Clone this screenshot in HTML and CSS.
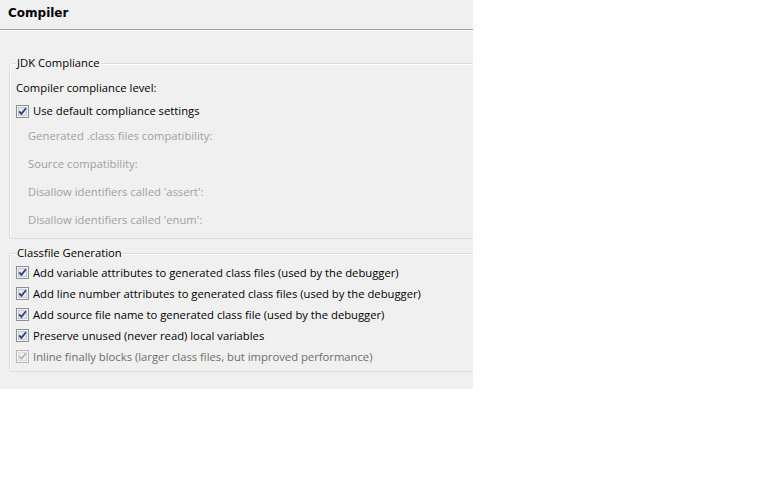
FILE: index.html
```html
<!DOCTYPE html>
<html>
<head>
<meta charset="utf-8">
<link rel="stylesheet" href="styles.css">
</head>
<body>
<div class="panel">
  <div class="header"><span class="title">Compiler</span></div>
  <div class="content">
    <fieldset class="group group-jdk">
      <legend>JDK Compliance</legend>
      <div class="row label-row">Compiler compliance level:</div>
      <label class="row check-row default-row">
        <svg class="cb" width="13" height="13" viewBox="0 0 13 13"><rect x="0.5" y="0.5" width="12" height="12" fill="#f4f4f4" stroke="#8e8f8f"/><rect x="2.5" y="2.5" width="8" height="8" fill="#e6e9ee" stroke="#c3c8d0"/><path d="M3.2 6.3 L5.4 8.8 L9.9 3.2" fill="none" stroke="#2c3f83" stroke-width="1.8"/></svg>
        <span>Use default compliance settings</span>
      </label>
      <div class="disabled-list">
        <div class="row disabled">Generated .class files compatibility:</div>
        <div class="row disabled">Source compatibility:</div>
        <div class="row disabled">Disallow identifiers called 'assert':</div>
        <div class="row disabled">Disallow identifiers called 'enum':</div>
      </div>
    </fieldset>
    <fieldset class="group group-class">
      <legend>Classfile Generation</legend>
      <label class="row check-row">
        <svg class="cb" width="13" height="13" viewBox="0 0 13 13"><rect x="0.5" y="0.5" width="12" height="12" fill="#f4f4f4" stroke="#8e8f8f"/><rect x="2.5" y="2.5" width="8" height="8" fill="#e6e9ee" stroke="#c3c8d0"/><path d="M3.2 6.3 L5.4 8.8 L9.9 3.2" fill="none" stroke="#2c3f83" stroke-width="1.8"/></svg>
        <span>Add variable attributes to generated class files (used by the debugger)</span>
      </label>
      <label class="row check-row">
        <svg class="cb" width="13" height="13" viewBox="0 0 13 13"><rect x="0.5" y="0.5" width="12" height="12" fill="#f4f4f4" stroke="#8e8f8f"/><rect x="2.5" y="2.5" width="8" height="8" fill="#e6e9ee" stroke="#c3c8d0"/><path d="M3.2 6.3 L5.4 8.8 L9.9 3.2" fill="none" stroke="#2c3f83" stroke-width="1.8"/></svg>
        <span>Add line number attributes to generated class files (used by the debugger)</span>
      </label>
      <label class="row check-row">
        <svg class="cb" width="13" height="13" viewBox="0 0 13 13"><rect x="0.5" y="0.5" width="12" height="12" fill="#f4f4f4" stroke="#8e8f8f"/><rect x="2.5" y="2.5" width="8" height="8" fill="#e6e9ee" stroke="#c3c8d0"/><path d="M3.2 6.3 L5.4 8.8 L9.9 3.2" fill="none" stroke="#2c3f83" stroke-width="1.8"/></svg>
        <span>Add source file name to generated class file (used by the debugger)</span>
      </label>
      <label class="row check-row">
        <svg class="cb" width="13" height="13" viewBox="0 0 13 13"><rect x="0.5" y="0.5" width="12" height="12" fill="#f4f4f4" stroke="#8e8f8f"/><rect x="2.5" y="2.5" width="8" height="8" fill="#e6e9ee" stroke="#c3c8d0"/><path d="M3.2 6.3 L5.4 8.8 L9.9 3.2" fill="none" stroke="#2c3f83" stroke-width="1.8"/></svg>
        <span>Preserve unused (never read) local variables</span>
      </label>
      <label class="row check-row inactive">
        <svg class="cb" width="13" height="13" viewBox="0 0 13 13"><rect x="0.5" y="0.5" width="12" height="12" fill="#f4f4f4" stroke="#b8b8b8"/><rect x="2.5" y="2.5" width="8" height="8" fill="#f0f0f0" stroke="#dadada"/><path d="M3.2 6.3 L5.4 8.8 L9.9 3.2" fill="none" stroke="#b0b0b0" stroke-width="1.6"/></svg>
        <span>Inline finally blocks (larger class files, but improved performance)</span>
      </label>
    </fieldset>
  </div>
</div>
</body>
</html>
```

FILE: styles.css
```css
html, body {
  margin: 0;
  padding: 0;
  background: #ffffff;
}

.panel {
  width: 473px;
  height: 389px;
  background: #f0f0f0;
  overflow: hidden;
  font-family: "Open Sans", "Noto Sans", sans-serif;
  font-size: 11.25px;
  color: #000;
}

.header {
  height: 29px;
  border-bottom: 1px solid #a0a0a0;
  box-shadow: 0 1px 0 #ffffff;
  display: flex;
  align-items: center;
  padding-left: 8px;
  box-sizing: content-box;
}

.title {
  font-family: "DejaVu Sans", sans-serif;
  font-weight: bold;
  font-size: 12px;
  padding-bottom: 3px;
}

.content {
  padding-top: 25px;
}

.group {
  margin: 0 -20px 0 9px;
  border: 1px solid #d5dfe5;
  border-radius: 3px;
  box-shadow: inset 1px 1px 0 #ffffff;
  padding: 0 0 0 6px;
  min-width: 0;
}

.group legend {
  padding: 0 1px;
  height: 16px;
  line-height: 16px;
  background: #f0f0f0;
}

.row {
  height: 16px;
  line-height: 16px;
  white-space: nowrap;
}

.group-jdk {
  padding-top: 9px;
  padding-bottom: 10px;
}

.label-row {
  margin-bottom: 7px;
}

.check-row {
  display: flex;
  align-items: center;
  gap: 4px;
}

.cb {
  flex: none;
  display: block;
}

.default-row {
  margin-bottom: 9px;
}

.disabled-list {
  display: flex;
  flex-direction: column;
  gap: 12px;
  padding-left: 12px;
}

.disabled {
  color: #a0a0a0;
}

.group-class {
  margin-top: 6px;
  padding-top: 1px;
  padding-bottom: 4px;
}

.group-class .check-row {
  height: 21px;
}

.inactive {
  color: #6d6d6d;
}
```
